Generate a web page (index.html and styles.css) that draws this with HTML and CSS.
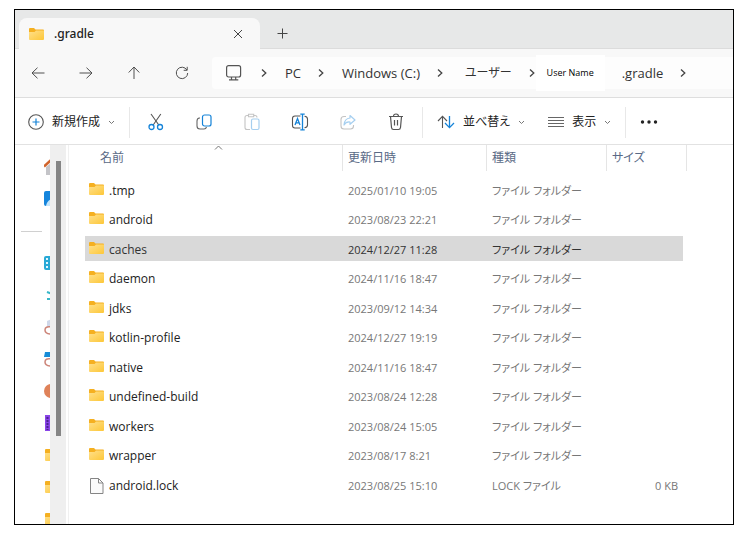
FILE: index.html
```
<!DOCTYPE html>
<html lang="ja">
<head>
    <meta charset="UTF-8">
    <meta name="viewport" content="width=device-width, initial-scale=1.0">
    <title>.gradle</title>
    <link rel="stylesheet" href="styles.css">
</head>
<body>

    <!-- shared icons -->
    <svg class="sprite" aria-hidden="true">
        <defs>
            <linearGradient id="folderFill" x1="0" y1="0" x2="1" y2="1">
                <stop offset="0" stop-color="#ffe08c"/>
                <stop offset="1" stop-color="#fdc738"/>
            </linearGradient>
        </defs>
        <symbol id="folder" viewBox="0 0 15 12">
            <path d="M0 1Q0 0 1 0H5L6.5 1.500H14Q15 1.500 15 2.500V6H0Z" fill="#f5b021"/>
            <path d="M0 4H5.500L7 2.500H15V11Q15 12 14 12H1Q0 12 0 11Z" fill="url(#folderFill)"/>
        </symbol>
        <symbol id="file" viewBox="0 0 14 16">
            <path d="M1 .5H9L13.500 5V15.500H1Z" fill="#fbfbfb" stroke="#858585"/>
            <path d="M9 .5V5H13.500" fill="none" stroke="#858585"/>
        </symbol>
        <symbol id="next" viewBox="0 0 8 10">
            <path d="M2 1.500L5.800 5L2 8.500" fill="none" stroke="#444" stroke-width="1.300"/>
        </symbol>
        <symbol id="down" viewBox="0 0 7 5">
            <path d="M1 1L3.500 3.500L6 1" fill="none" stroke="#777"/>
        </symbol>
    </svg>

    <div class="window">

        <div class="tabs">
            <div class="tab">
                <svg class="folder" aria-hidden="true"><use href="#folder"/></svg>
                <span class="tab-title">.gradle</span>
                <button type="button" class="tab-button" aria-label="閉じる">
                    <svg width="10" height="10" viewBox="0 0 10 10"><path d="M1 1L9 9M9 1L1 9" fill="none" stroke="#444"/></svg>
                </button>
            </div>
            <button type="button" class="tab-button" aria-label="新しいタブ">
                <svg width="11" height="11" viewBox="0 0 11 11"><path d="M5.500 .5V10.500M.5 5.500H10.500" fill="none" stroke="#444"/></svg>
            </button>
        </div>

        <div class="nav">
            <button type="button" class="icon-button" aria-label="戻る">
                <svg width="14" height="12" viewBox="0 0 14 12"><path d="M13.500 6H1M6.500 .7L1 6L6.500 11.300" fill="none" stroke="#505050"/></svg>
            </button>
            <button type="button" class="icon-button" aria-label="進む">
                <svg width="14" height="12" viewBox="0 0 14 12"><path d="M.5 6H13M7.500 .7L13 6L7.500 11.300" fill="none" stroke="#505050"/></svg>
            </button>
            <button type="button" class="icon-button" aria-label="上へ">
                <svg width="12" height="14" viewBox="0 0 12 14"><path d="M6 13V1M.7 6.500L6 1L11.300 6.500" fill="none" stroke="#505050"/></svg>
            </button>
            <button type="button" class="icon-button" aria-label="更新">
                <svg width="14" height="14" viewBox="0 0 14 14"><path d="M11.900 4A5.700 5.700 0 1 0 12.700 7M12.200 .8V4.300H8.700" fill="none" stroke="#505050"/></svg>
            </button>

            <nav class="address" aria-label="アドレス">
                <svg width="20" height="16" viewBox="0 0 20 16" aria-hidden="true"><rect x="2.600" y=".7" width="14" height="11.300" rx="2" fill="none" stroke="#555" stroke-width="1.200"/><path d="M7.500 12V14.600M11.700 12V14.600M5 14.800H14.300" fill="none" stroke="#555" stroke-width="1.200"/></svg>
                <svg class="next" aria-hidden="true"><use href="#next"/></svg>
                <a href="#">PC</a>
                <svg class="next" aria-hidden="true"><use href="#next"/></svg>
                <a href="#">Windows (C:)</a>
                <svg class="next" aria-hidden="true"><use href="#next"/></svg>
                <a href="#" class="kana">ユーザー</a>
                <svg class="next" aria-hidden="true"><use href="#next"/></svg>
                <a href="#" class="user">User Name</a>
                <a href="#">.gradle</a>
                <svg class="next" aria-hidden="true"><use href="#next"/></svg>
            </nav>
        </div>

        <div class="toolbar">
            <button type="button" class="text-button">
                <svg width="16" height="16" viewBox="0 0 16 16"><circle cx="8" cy="8" r="7.300" fill="none" stroke="#555" stroke-width="1.100"/><path d="M8 4.500V11.500M4.500 8H11.500" fill="none" stroke="#1583d8" stroke-width="1.200"/></svg>
                新規作成
                <svg class="down"><use href="#down"/></svg>
            </button>
            <span class="divider"></span>
            <div class="actions">
                <button type="button" class="icon-button" aria-label="切り取り">
                    <svg width="16" height="18" viewBox="0 0 16 18"><path d="M3 1L11 12.300M12.800 1L5 12.300" fill="none" stroke="#555" stroke-width="1.100"/><g fill="none" stroke="#1583d8" stroke-width="1.300"><circle cx="3.500" cy="14" r="2.500"/><circle cx="12" cy="14" r="2.500"/></g></svg>
                </button>
                <button type="button" class="icon-button" aria-label="コピー">
                    <svg width="16" height="16" viewBox="0 0 16 16"><path d="M4 4H3.500Q1 4.300 1 7V12Q1 15 4 15H8Q10 15 10.500 13" fill="none" stroke="#666" stroke-width="1.100"/><rect x="6.500" y="1" width="8.500" height="11" rx="2" fill="#fff" stroke="#1583d8" stroke-width="1.200"/></svg>
                </button>
                <button type="button" class="icon-button" aria-label="貼り付け" disabled>
                    <svg width="16" height="18" viewBox="0 0 16 18"><path d="M5 2.500H3Q1 2.500 1 4.500V14.500Q1 16.500 3 16.500H6M10 2.500H11Q13 2.500 13 4.500M4.500 3.800V1.200H9.700V3.800Z" fill="none" stroke="#c4c4c4" stroke-width="1.100"/><rect x="7.500" y="6" width="7.500" height="10.500" rx="1.500" fill="#fff" stroke="#a6cff0" stroke-width="1.200"/></svg>
                </button>
                <button type="button" class="icon-button" aria-label="名前の変更">
                    <svg width="18" height="18" viewBox="0 0 18 18"><path d="M9.500 3H4Q1.500 3 1.500 5.500V12.500Q1.500 15 4 15H9.500M13.500 3.200Q16.500 3.500 16.500 6V12Q16.500 14.500 13.500 14.800" fill="none" stroke="#555" stroke-width="1.100"/><path d="M4 12L6.500 5.500L9 12M4.900 9.800H8.100M11.500 1.500V16.500M9.300 1.200H13.700M9.300 16.800H13.700" fill="none" stroke="#1583d8" stroke-width="1.300"/></svg>
                </button>
                <button type="button" class="icon-button" aria-label="共有" disabled>
                    <svg width="16" height="16" viewBox="0 0 16 16"><path d="M6 2.500H4Q1 2.500 1 5.500V12Q1 15 4 15H10.500Q13.500 15 13.500 12V11" fill="none" stroke="#c4c4c4" stroke-width="1.100"/><path d="M10 1.500L15 6L10 10.300V8Q6 7.500 4 11Q4.500 4.500 10 4Z" fill="none" stroke="#a6cff0" stroke-width="1.200" stroke-linejoin="round"/></svg>
                </button>
                <button type="button" class="icon-button" aria-label="削除">
                    <svg width="16" height="18" viewBox="0 0 16 18"><path d="M1 3.500H15M5.500 3.300Q5.500 1 8 1Q10.500 1 10.500 3.300M2.500 3.500L3.500 14.500Q3.700 16.500 5.500 16.500H10.500Q12.300 16.500 12.500 14.500L13.500 3.500M6.500 7V12.500M9.500 7V12.500" fill="none" stroke="#555" stroke-width="1.200"/></svg>
                </button>
            </div>
            <span class="divider"></span>
            <button type="button" class="text-button">
                <svg width="18" height="14" viewBox="0 0 18 14"><path d="M5.500 13V1.500M1 6L5.500 1.300L10 6" fill="none" stroke="#555" stroke-width="1.100"/><path d="M12.500 1V12.500M8 8L12.500 12.600L17 8" fill="none" stroke="#1583d8" stroke-width="1.300"/></svg>
                並べ替え
                <svg class="down"><use href="#down"/></svg>
            </button>
            <button type="button" class="text-button view">
                <svg width="16" height="12" viewBox="0 0 16 12"><path d="M0 1.500H16M0 4.500H16M0 7.500H16M0 10.500H16" fill="none" stroke="#666"/></svg>
                表示
                <svg class="down"><use href="#down"/></svg>
            </button>
            <span class="divider"></span>
            <button type="button" class="icon-button" aria-label="もっと見る">
                <svg width="18" height="4" viewBox="0 0 18 4"><g fill="#222"><circle cx="2.500" cy="2" r="1.700"/><circle cx="9" cy="2" r="1.700"/><circle cx="15.500" cy="2" r="1.700"/></g></svg>
            </button>
        </div>

        <div class="content">
            <!-- navigation pane, collapsed so that only the icon edges show -->
            <div class="sidebar">
                <svg viewBox="0 0 16 16"><path d="M2 8L8 3V16H2Z" fill="#c4c4c8"/><path d="M0 7.500L7 1" fill="none" stroke="#d0642c" stroke-width="2.500"/></svg>
                <svg viewBox="0 0 16 16"><rect width="16" height="15" rx="2" fill="#1585dc"/><path d="M2 15Q3 9 8 8V15Z" fill="#c5e6fb"/></svg>
                <hr>
                <svg viewBox="0 0 16 16"><rect y="1" width="16" height="14" rx="2" fill="#29a9d6"/><path d="M3 3V5M3 7V9M3 11V13" stroke="#e3f7ff" stroke-width="2"/></svg>
                <svg viewBox="0 0 16 16"><path d="M3 5L8 7M3 12H8" fill="none" stroke="#38b7c8" stroke-width="2"/></svg>
                <svg viewBox="0 0 16 16"><path d="M3 8V2L8 0V8Z" fill="#cfd8ea"/><path d="M7 8Q1 7 1 11Q1 15 7 15" fill="none" stroke="#cc8478" stroke-width="1.500"/></svg>
                <svg viewBox="0 0 16 16"><path d="M1 1H8V6H0Z" fill="#178cd7"/><path d="M7 8Q1 7 1 11Q1 15 7 15" fill="none" stroke="#cc8478" stroke-width="1.500"/></svg>
                <svg viewBox="0 0 16 16"><circle cx="7" cy="8" r="7" fill="#df8259"/></svg>
                <svg viewBox="0 0 16 16"><rect x="1" width="15" height="16" fill="#8a45e8"/><path d="M3.500 2V15" stroke="#4a2390" stroke-width="2" stroke-dasharray="2 1"/></svg>
                <svg viewBox="0 0 16 16"><use href="#folder" x="1" y="2" width="15" height="12"/></svg>
                <svg viewBox="0 0 16 16"><use href="#folder" x="1" y="2" width="15" height="12"/></svg>
                <svg viewBox="0 0 16 16"><use href="#folder" x="1" y="2" width="15" height="12"/></svg>
            </div>
            <div class="scrollbar"><div class="thumb"></div></div>

            <div class="list">
                <table>
                    <colgroup>
                        <col class="col-name">
                        <col class="col-date">
                        <col class="col-type">
                        <col class="col-size">
                    </colgroup>
                    <thead>
                        <tr>
                            <th aria-sort="ascending"><button type="button">名前
                                <svg class="sort" width="9" height="5" viewBox="0 0 9 5"><path d="M1 4.500L4.500 1L8 4.500" fill="none" stroke="#777"/></svg>
                            </button></th>
                            <th><button type="button">更新日時</button></th>
                            <th><button type="button">種類</button></th>
                            <th><button type="button">サイズ</button></th>
                        </tr>
                    </thead>
                    <tbody>
                        <tr><td><div class="name"><svg class="folder"><use href="#folder"/></svg>.tmp</div></td><td>2025/01/10 19:05</td><td>ファイル フォルダー</td><td></td></tr>
                        <tr><td><div class="name"><svg class="folder"><use href="#folder"/></svg>android</div></td><td>2023/08/23 22:21</td><td>ファイル フォルダー</td><td></td></tr>
                        <tr class="selected"><td><div class="name"><svg class="folder"><use href="#folder"/></svg>caches</div></td><td>2024/12/27 11:28</td><td>ファイル フォルダー</td><td></td></tr>
                        <tr><td><div class="name"><svg class="folder"><use href="#folder"/></svg>daemon</div></td><td>2024/11/16 18:47</td><td>ファイル フォルダー</td><td></td></tr>
                        <tr><td><div class="name"><svg class="folder"><use href="#folder"/></svg>jdks</div></td><td>2023/09/12 14:34</td><td>ファイル フォルダー</td><td></td></tr>
                        <tr><td><div class="name"><svg class="folder"><use href="#folder"/></svg>kotlin-profile</div></td><td>2024/12/27 19:19</td><td>ファイル フォルダー</td><td></td></tr>
                        <tr><td><div class="name"><svg class="folder"><use href="#folder"/></svg>native</div></td><td>2024/11/16 18:47</td><td>ファイル フォルダー</td><td></td></tr>
                        <tr><td><div class="name"><svg class="folder"><use href="#folder"/></svg>undefined-build</div></td><td>2023/08/24 12:28</td><td>ファイル フォルダー</td><td></td></tr>
                        <tr><td><div class="name"><svg class="folder"><use href="#folder"/></svg>workers</div></td><td>2023/08/24 15:05</td><td>ファイル フォルダー</td><td></td></tr>
                        <tr><td><div class="name"><svg class="folder"><use href="#folder"/></svg>wrapper</div></td><td>2023/08/17 8:21</td><td>ファイル フォルダー</td><td></td></tr>
                        <tr><td><div class="name"><svg class="file"><use href="#file"/></svg>android.lock</div></td><td>2023/08/25 15:10</td><td>LOCK ファイル</td><td>0 KB</td></tr>
                    </tbody>
                </table>
            </div>
        </div>

    </div>

</body>
</html>
```
FILE: styles.css
```
*{
    box-sizing: border-box;
}
body{
    margin: 0;
    padding: 9px 13px 15px 14px;
    background: white;
    color: #222;
    font-family: "Open Sans", "Noto Sans CJK JP", sans-serif;
    font-size: 12px;
    line-height: 16px;
    font-feature-settings: "palt";
}
button{
    margin: 0;
    padding: 0;
    border: none;
    background: none;
    color: inherit;
    font: inherit;
    font-feature-settings: inherit;
    cursor: pointer;
}
svg{
    display: block;
    flex: none;
}
.sprite{
    position: absolute;
    width: 0;
    height: 0;
}
.window{
    display: flex;
    flex-direction: column;
    min-height: calc(100vh - 24px);
    border: 1px solid black;
    overflow: hidden;
}
.folder{
    width: 15px;
    height: 12px;
}
.file{
    width: 15px;
    height: 16px;
}
.next{
    width: 8px;
    height: 10px;
}
.down{
    width: 7px;
    height: 5px;
}

/* tab strip */
.tabs{
    display: flex;
    align-items: flex-end;
    height: 39px;
    padding-left: 4px;
    background: #e7e8e8;
    box-shadow: inset 0 -1px #dcdcdc;
}
.tab{
    display: flex;
    align-items: center;
    gap: 10px;
    width: 241px;
    height: 31px;
    padding: 0 10px;
    background: #f8f8f8;
    border-radius: 8px 8px 0 0;
}
.tab-title{
    flex: 1;
    font-family: "Noto Sans", sans-serif;
    font-weight: 500;
}
.tab-button{
    display: flex;
    align-items: center;
    justify-content: center;
    width: 24px;
    height: 31px;
}
.tabs > .tab-button{
    margin-left: 10px;
}

/* navigation and address */
.nav{
    display: flex;
    align-items: center;
    gap: 16px;
    height: 49px;
    padding-left: 7px;
    background: #f8f8f8;
    border-bottom: 1px solid #dedede;
}
.icon-button{
    display: flex;
    align-items: center;
    justify-content: center;
    width: 32px;
    height: 32px;
}
.address{
    display: flex;
    flex: 1;
    align-items: center;
    gap: 16px;
    height: 32px;
    margin-left: -2px;
    padding-left: 12px;
    background: #fdfdfd;
    border-radius: 4px 0 0 4px;
    font-size: 13px;
    white-space: nowrap;
}
.address a{
    padding-left: 1px;
    color: #333;
    text-decoration: none;
}
.address .kana{
    padding-left: 5px;
    font-size: 12px;
}
.address .user{
    margin-left: -16px;
    padding: 10px 11px;
    background: white;
    color: black;
    font-size: 9px;
}

/* commands */
.toolbar{
    display: flex;
    align-items: center;
    height: 47px;
    padding: 2px 0 0 13px;
    border-bottom: 1px solid #e2e2e2;
}
.text-button{
    display: flex;
    align-items: center;
    gap: 8px;
}
.divider{
    width: 1px;
    height: 31px;
    margin: 0 14px;
    background: #e8e8e8;
}
.actions{
    display: flex;
    gap: 16px;
    margin: 0 -4px;
}
.view{
    margin-left: 23px;
}
.toolbar > .icon-button{
    margin-left: -7px;
}

/* main area */
.content{
    display: flex;
    flex: 1;
    overflow: hidden;
}
.sidebar{
    display: flex;
    flex-direction: column;
    gap: 16px;
    width: 35px;
    margin-bottom: -8px;
    padding-top: 14px;
    overflow: hidden;
}
.sidebar svg{
    width: 16px;
    height: 16px;
    margin-left: 29px;
}
.sidebar hr{
    width: 21px;
    margin: 8px 6px 7px;
    border: none;
    border-top: 1px solid #d0d0d0;
}
.scrollbar{
    width: 16px;
    padding: 16px 5px 0 6px;
    background: #efefef;
}
.thumb{
    height: 275px;
    background: #858585;
}
.list{
    flex: 1;
    margin-left: 2px;
    padding-left: 16px;
    border-left: 1px solid #f0f0f0;
    overflow: hidden;
}
table{
    width: 602px;
    table-layout: fixed;
    border-collapse: separate;
    border-spacing: 0;
}
.col-name{
    width: 258px;
}
.col-date{
    width: 144px;
}
.col-type{
    width: 120px;
}
.col-size{
    width: 80px;
}
th{
    padding: 0 0 4px;
    font-weight: normal;
}
th button{
    position: relative;
    display: block;
    width: 100%;
    height: 26px;
    padding-left: 5px;
    border-right: 1px solid #e5e5e5;
    color: #5a6a86;
    text-align: left;
}
th:first-child button{
    padding-left: 15px;
}
.sort{
    position: absolute;
    top: 0;
    left: 50%;
}
td{
    height: 30px;
    padding: 2px 0 0 5px;
    border: solid transparent;
    border-width: 2px 0 3px;
    background-clip: padding-box;
    color: #777;
    font-size: 11px;
    white-space: nowrap;
}
tr:nth-child(even) td{
    height: 29px;
}
td:first-child{
    padding-left: 4px;
    color: #222;
    font-size: 12px;
}
td:last-child{
    padding-right: 5px;
    border-right-width: 4px;
    text-align: right;
}
.name{
    display: flex;
    align-items: flex-start;
    gap: 5px;
}
.selected td{
    background-color: #d9d9d9;
    color: #333;
}
```
